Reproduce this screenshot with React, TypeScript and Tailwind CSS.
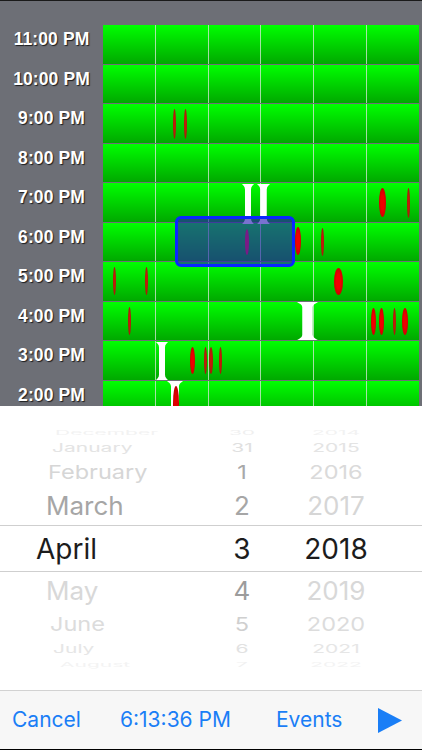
import React from "react";

type Mark = { x: number; y: number; w: number; h: number };

const hours = [
  "11:00 PM",
  "10:00 PM",
  "9:00 PM",
  "8:00 PM",
  "7:00 PM",
  "6:00 PM",
  "5:00 PM",
  "4:00 PM",
  "3:00 PM",
  "2:00 PM",
];

// red event ticks, page coordinates
const redMarks: Mark[] = [
  { x: 173, y: 108, w: 3, h: 30 },
  { x: 184, y: 108, w: 3, h: 30 },
  { x: 379, y: 187, w: 7, h: 29 },
  { x: 407, y: 187, w: 3, h: 30 },
  { x: 295, y: 226, w: 6, h: 28 },
  { x: 321, y: 227, w: 3, h: 28 },
  { x: 113, y: 266, w: 3, h: 28 },
  { x: 145, y: 266, w: 3, h: 28 },
  { x: 334, y: 267, w: 9, h: 27 },
  { x: 128, y: 306, w: 3, h: 28 },
  { x: 371, y: 307, w: 5, h: 27 },
  { x: 379, y: 307, w: 5, h: 27 },
  { x: 393, y: 307, w: 3, h: 27 },
  { x: 402, y: 307, w: 6, h: 27 },
  { x: 190, y: 346, w: 5, h: 27 },
  { x: 204, y: 346, w: 3, h: 27 },
  { x: 209, y: 346, w: 4, h: 27 },
  { x: 219, y: 346, w: 3, h: 27 },
];

const beams: Mark[] = [
  { x: 242, y: 183, w: 12, h: 40 },
  { x: 257, y: 183, w: 13, h: 40 },
  { x: 297, y: 301, w: 21, h: 38 },
  { x: 156, y: 341, w: 12, h: 38 },
  { x: 167, y: 380, w: 16, h: 40 },
];

type PickRow = {
  h: number;
  size: number;
  sy: number;
  mx: number;
  month: string;
  day: string;
  year: string;
  mc: string;
  dc: string;
  yc: string;
};

const pickRows: PickRow[] = [
  { h: 12, size: 21, sy: 0.3, mx: 55, month: "December", day: "30", year: "2014", mc: "#f2f2f2", dc: "#efefef", yc: "#f2f2f2" },
  { h: 18, size: 21, sy: 0.55, mx: 52, month: "January", day: "31", year: "2015", mc: "#e4e4e4", dc: "#e0e0e0", yc: "#e4e4e4" },
  { h: 31, size: 23.5, sy: 0.82, mx: 48, month: "February", day: "1", year: "2016", mc: "#d6d6d6", dc: "#a9a9a9", yc: "#dadada" },
  { h: 38, size: 26, sy: 0.96, mx: 46, month: "March", day: "2", year: "2017", mc: "#a6a6a6", dc: "#a6a6a6", yc: "#d6d6d6" },
  { h: 47, size: 28, sy: 1, mx: 36, month: "April", day: "3", year: "2018", mc: "#1c1c1c", dc: "#1c1c1c", yc: "#1c1c1c" },
  { h: 37, size: 26, sy: 0.96, mx: 46, month: "May", day: "4", year: "2019", mc: "#d8d8d8", dc: "#9c9c9c", yc: "#d8d8d8" },
  { h: 30, size: 23.5, sy: 0.82, mx: 50, month: "June", day: "5", year: "2020", mc: "#dcdcdc", dc: "#cfcfcf", yc: "#dcdcdc" },
  { h: 19, size: 21, sy: 0.55, mx: 53, month: "July", day: "6", year: "2021", mc: "#e6e6e6", dc: "#e2e2e2", yc: "#e6e6e6" },
  { h: 12, size: 21, sy: 0.3, mx: 60, month: "August", day: "7", year: "2022", mc: "#f3f3f3", dc: "#f1f1f1", yc: "#f3f3f3" },
];

const Beam: React.FC<{ m: Mark }> = ({ m }) => (
  <svg
    className="absolute"
    style={{ left: m.x, top: m.y, width: m.w, height: m.h }}
    viewBox="0 0 100 100"
    preserveAspectRatio="none"
  >
    <path
      d="M0 0 H100 C92 3 75 6 75 14 V86 C75 94 92 97 100 100 H0 C8 97 25 94 25 86 V14 C25 6 8 3 0 0 Z"
      fill="#ffffff"
    />
  </svg>
);

const App: React.FC = () => {
  return (
    <div className="w-[422px] h-[750px] flex flex-col overflow-hidden bg-white font-['Inter',sans-serif]">
      {/* timeline */}
      <div className="relative h-[406px] shrink-0 overflow-hidden bg-[#6d6f76] border-t border-[#1a1a1a] pt-[24px] flex flex-col gap-[1px]">
        {hours.map((label) => (
          <div key={label} className="flex h-[38.5px] shrink-0">
            <div className="w-[103px] shrink-0 flex items-center justify-center pb-[10px] text-white font-bold text-[17.5px] tracking-[0.1px] font-['Liberation_Sans',sans-serif] [text-shadow:1px_1px_1px_rgba(0,0,0,0.75)]">
              {label}
            </div>
            <div className="w-[316px] flex bg-gradient-to-b from-[#00ff00] to-[#00a900]">
              {[0, 1, 2, 3, 4, 5].map((c) => (
                <div
                  key={c}
                  className={
                    c === 0 ? "flex-1" : "flex-1 border-l border-[rgba(220,230,220,0.75)]"
                  }
                />
              ))}
            </div>
          </div>
        ))}

        {redMarks.map((m, i) => (
          <div
            key={"r" + i}
            className={
              m.w >= 5
                ? "absolute rounded-[50%] bg-[radial-gradient(ellipse_at_center,#f00000_35%,#b00000_100%)]"
                : "absolute rounded-[50%] bg-[radial-gradient(ellipse_at_center,#c41a0a_30%,#8a2008_100%)]"
            }
            style={{ left: m.x, top: m.y, width: m.w, height: m.h }}
          />
        ))}

        {beams.map((m, i) => (
          <Beam key={"b" + i} m={m} />
        ))}

        <div
          className="absolute rounded-[50%] bg-[radial-gradient(ellipse_at_center,#e00000_35%,#a00000_100%)]"
          style={{ left: 173, top: 385, width: 6, height: 34 }}
        />

        {/* selection box */}
        <div className="absolute left-[175px] top-[215px] w-[120px] h-[51px] rounded-[6px] border-[3px] border-[#0a26ff] bg-[rgba(37,28,179,0.62)]">
          <div className="absolute left-[67px] top-[10px] w-[4px] h-[26px] rounded-[50%] bg-[#7a1a86]" />
        </div>
      </div>

      {/* date picker */}
      <div className="relative flex-1 flex flex-col pt-[20px]">
        {pickRows.map((r) => (
          <div
            key={r.month}
            className={
              r.month === "April"
                ? "flex items-center shrink-0 border-y border-[#cfcfcf]"
                : "flex items-center shrink-0"
            }
            style={{ height: r.h }}
          >
            <div
              className="flex items-center w-full leading-none"
              style={{ transform: `scaleY(${r.sy})`, fontSize: r.size }}
            >
              <div className="w-[212px] shrink-0">
                <span style={{ marginLeft: r.mx, color: r.mc }}>{r.month}</span>
              </div>
              <div className="w-[60px] shrink-0 text-center" style={{ color: r.dc }}>
                {r.day}
              </div>
              <div className="w-[128px] shrink-0 text-center" style={{ color: r.yc }}>
                {r.year}
              </div>
            </div>
          </div>
        ))}
      </div>

      {/* toolbar */}
      <div className="h-[60px] shrink-0 bg-[#f7f7f7] border-t border-[#d2d2d2] border-b border-b-black flex items-center text-[21px] text-[#1a7ef6] pl-[12px]">
        <div className="w-[108px] shrink-0">Cancel</div>
        <div className="w-[156px] shrink-0">6:13:36 PM</div>
        <div className="w-[102px] shrink-0">Events</div>
        <svg className="w-[24px] h-[25px]" viewBox="0 0 24 25">
          <path d="M0 0 L24 12.5 L0 25 Z" fill="#1a7ef6" />
        </svg>
      </div>
    </div>
  );
};

export default App;
